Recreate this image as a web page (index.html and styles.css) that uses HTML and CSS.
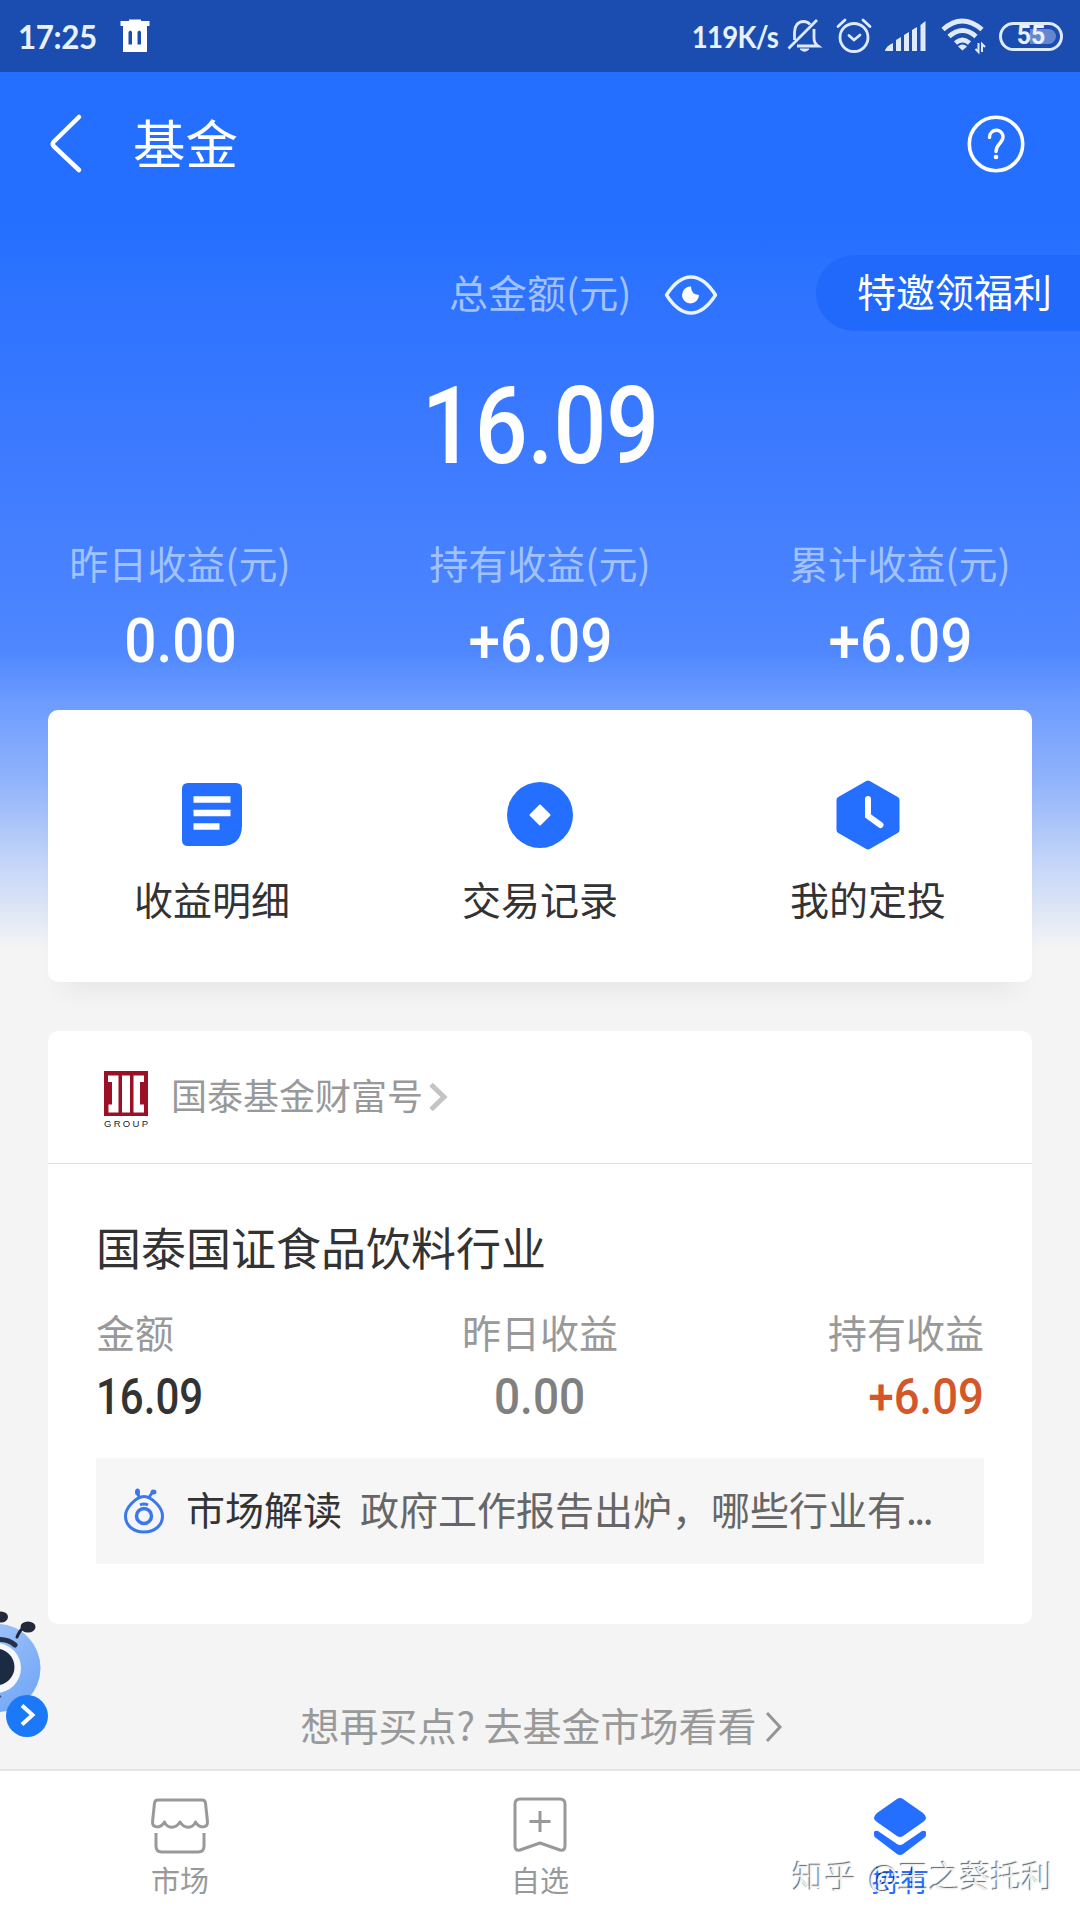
FILE: index.html
```html
<!DOCTYPE html>
<html lang="zh-CN">
<head>
<meta charset="utf-8">
<title>基金</title>
<link rel="stylesheet" href="styles.css">
</head>
<body>
<div class="app">
  <div class="status">
    <span class="clock">17:25</span>
    <svg class="trash" width="32" height="36" viewBox="0 0 32 36"><path fill="#fff" fill-rule="evenodd" d="M10 3V1.500h12V3h8.500v5H28v26H4V8H1.500V3zM9.500 14v12.500h3.500V14q-1.700-3-3.500 0zM18.500 14v12.500h3.500V14q-1.700-3-3.500 0z"/></svg>
    <span class="speed">119K/s</span>
    <svg class="bell" width="34" height="36" viewBox="0 0 34 36" fill="none" stroke="#dfeaff" stroke-width="2.800"><path d="M7.500 22V14c0-6 3.500-10.500 9-10.500 3 0 5 1 6.500 3M27 11v9c0 4 1 6 4 8H10M1.500 30.500L30 2"/><path d="M13 31h9q-4.500 4.500-9 0z" fill="#dfeaff" stroke-width="1"/></svg>
    <svg class="alarm" width="36" height="36" viewBox="0 0 36 36" fill="none" stroke="#dfeaff" stroke-width="2.800" stroke-linecap="round"><circle cx="18" cy="19.500" r="14"/><path d="M13 17.500l5 4.500 6-5M2 8.500l7-6.500M34 8.500L27 2"/></svg>
    <svg class="signal" width="42" height="32" viewBox="0 0 42 32" fill="#dfeaff"><path d="M0 31q1-5 8-8v8zM11 31V20l5-3v14zM19 31V15l5-3v19zM27 31V10l5-3v24zM35.500 31V5l5-4v30z"/></svg>
    <svg class="wifi" width="44" height="36" viewBox="0 0 44 36" fill="none" stroke="#dfeaff" stroke-width="4.800"><path d="M2 11.500q19-17 39 0M8 18.500q13.500-12 27 0M14.500 25q7-6 14 0"/><path d="M17 28.500q4.500-4 9 0l-4.500 4z" fill="#dfeaff" stroke="none"/><path d="M37.500 25v9l-3-3M41 34v-8l3 3" stroke-width="2"/></svg>
    <span class="battery"><i></i><b>55</b></span>
  </div>

  <div class="hero">
    <div class="titlebar">
      <svg width="36" height="60" viewBox="0 0 36 60" fill="none" stroke="#fff" stroke-width="4.500" stroke-linecap="round" stroke-linejoin="round"><path d="M32 3L6.500 28 Q5 30 6.500 32L32 56"/></svg>
      <h1>基金</h1>
      <svg class="help" width="60" height="60" viewBox="0 0 60 60" fill="none" stroke="#fff"><circle cx="30" cy="30" r="26.700" stroke-width="3.600"/><path d="M23.500 23.500c0-9.500 13.500-9.500 13.500-.5 0 6-7 7-7 14.500" stroke-width="3.400" stroke-linecap="round"/><circle cx="30" cy="43" r="2.300" fill="#fff" stroke="none"/></svg>
    </div>
    <div class="total-row">
      <span class="muted">总金额(元)</span>
      <svg width="54" height="40" viewBox="0 0 54 40"><path d="M2.500 20Q14 2 27 2T51.500 20Q40 38 27 38T2.500 20z" fill="none" stroke="#eaf3ff" stroke-width="3.400" stroke-linejoin="round"/><path d="M27 11.500q0 8 8 8.500a8.500 8.500 0 1 1-8-8.500z" fill="#fff"/></svg>
      <span class="invite">特邀领福利</span>
    </div>
    <div class="total"><span class="num">16.09</span></div>
    <div class="stats">
      <div><span class="muted">昨日收益(元)</span><span class="num">0.00</span></div>
      <div><span class="muted">持有收益(元)</span><span class="num">+6.09</span></div>
      <div><span class="muted">累计收益(元)</span><span class="num">+6.09</span></div>
    </div>
  </div>

  <div class="actions">
    <div>
      <svg width="72" height="72" viewBox="0 0 72 72"><path fill="#246fff" d="M12 4h48q6 0 6 6v36q0 21-21 21H12q-6 0-6-6V10q0-6 6-6z"/><path d="M17.500 20.500h37M17.500 34h37M17.500 47.500h26" stroke="#fff" stroke-width="6.500"/></svg>
      <span>收益明细</span>
    </div>
    <div>
      <svg width="72" height="72" viewBox="0 0 72 72"><circle cx="36" cy="36" r="33" fill="#246fff"/><path d="M36 26.500l9.500 9.500-9.500 9.500-9.500-9.500z" fill="#fff" stroke="#fff" stroke-width="2" stroke-linejoin="round"/></svg>
      <span>交易记录</span>
    </div>
    <div>
      <svg width="72" height="72" viewBox="0 0 72 72"><path d="M36 5L64 21V51L36 67 8 51V21z" fill="#246fff" stroke="#246fff" stroke-width="7" stroke-linejoin="round"/><path d="M36 20v17l12.500 9" fill="none" stroke="#fff" stroke-width="6" stroke-linecap="round"/></svg>
      <span>我的定投</span>
    </div>
  </div>

  <div class="fund">
    <div class="fund-head">
      <svg class="logo" width="48" height="60" viewBox="0 0 48 60"><path fill="#9c1026" d="M2 2h44v45H2z"/><path fill="#fff" d="M6 6.500h10.500v37H6.500v-8h3.500V13H6zM20 6.500h8v37h-8zM31.500 6.500H42V13h-4v22.500h4v8H31.500z"/><text x="2" y="58" textLength="44" font-family="Liberation Sans" font-size="9.500" fill="#222">GROUP</text></svg>
      <span>国泰基金财富号</span>
      <svg class="arrow" width="22" height="32" viewBox="0 0 22 32" fill="none" stroke="#c4c4c4" stroke-width="5"><path d="M3 3.500L16 16 3 28.500"/></svg>
    </div>
    <div class="fund-body">
      <h2>国泰国证食品饮料行业</h2>
      <div class="figures">
        <div><span>金额</span><span class="num dark">16.09</span></div>
        <div><span>昨日收益</span><span class="num grey">0.00</span></div>
        <div><span>持有收益</span><span class="num rise">+6.09</span></div>
      </div>
      <div class="notice">
        <svg width="42" height="48" viewBox="0 0 42 48" fill="none" stroke="#3b78ee"><path d="M21 9.500Q27 9.500 34 17 39.500 23 39.500 29C39.500 39 31 45 21 45S2.500 39 2.500 29Q2.500 23 8 17 15 9.500 21 9.500z" stroke-width="3"/><circle cx="21" cy="29" r="7.500" stroke-width="3.500"/><path d="M17 18q4-2 8 0" stroke-width="3"/><path d="M16.500 11l-2-5M25.500 11l3.500-5" stroke-width="3"/><ellipse cx="14.500" cy="5" rx="2.500" ry="3.500" fill="#3b78ee" stroke="none"/><ellipse cx="30.500" cy="5" rx="3" ry="2.500" fill="#3b78ee" stroke="none"/></svg>
        <strong>市场解读</strong>
        <span>政府工作报告出炉，哪些行业有<em>...</em></span>
      </div>
    </div>
  </div>

  <div class="more">
    <span>想再买点? 去基金市场看看</span>
    <svg width="22" height="34" viewBox="0 0 22 34" fill="none" stroke="#949494" stroke-width="3"><path d="M4 3l13 14L4 31"/></svg>
  </div>

  <nav class="tabs">
    <div>
      <svg width="60" height="60" viewBox="0 0 60 60" fill="none" stroke="#999" stroke-width="3"><path d="M8 4h44q3 0 3.500 3L57.500 26c0 6-8 7-12 0-3 7-11 7-15.500 0-4.500 7-12.500 7-15.500 0-4 7-12 6-12 0L4.500 7Q5 4 8 4zM6 37v13q0 6 6 6h36q6 0 6-6V37" stroke-linejoin="round"/></svg>
      <span>市场</span>
    </div>
    <div>
      <svg width="60" height="60" viewBox="0 0 60 60" fill="none" stroke="#999" stroke-width="3"><path d="M10 3h40q5 0 5 5v42q0 5-5 4L30 47 10 54q-5 1-5-4V8q0-5 5-5zM30 15v21M19.500 25.500h21" stroke-linejoin="round"/></svg>
      <span>自选</span>
    </div>
    <div class="active">
      <svg width="60" height="60" viewBox="0 0 60 60" fill="#246fff"><path d="M27 3q3-2 6 0l20 14q6 5 0 9L33 40q-3 2-6 0L7 26q-6-4 0-9z"/><path d="M4 36q1-2 4-1l19 13q3 2 6 0l19-13q3-1 4 1v3q0 2-2 3L33 58q-3 2-6 0L6 42q-2-1-2-3z"/></svg>
      <span>持有</span>
    </div>
  </nav>

  <div class="helper">
    <svg width="50" height="132" viewBox="0 0 50 132">
      <defs><linearGradient id="face" x1="0" y1="0" x2="1" y2="1"><stop offset="0" stop-color="#aecbf9"/><stop offset="1" stop-color="#6ba3f5"/></linearGradient></defs>
      <ellipse cx="-3" cy="66" rx="43.500" ry="44" fill="url(#face)"/>
      <circle cx="-4" cy="66" r="25" fill="#f6f7fd"/><circle cx="-4" cy="65" r="18.500" fill="#1d2b42"/>
      <path d="M-6 38q13-2 21 5" fill="none" stroke="#26304c" stroke-width="5" stroke-linecap="round"/>
      <path d="M17 35q3-7 7-10" fill="none" stroke="#20232f" stroke-width="3" stroke-linecap="round"/>
      <ellipse cx="28" cy="25" rx="7.500" ry="5.500" fill="#23283a"/><ellipse cx="1" cy="15" rx="7" ry="5.500" fill="#23283a"/>
      <path d="M-2 93l3 2" stroke="#3a4c7c" stroke-width="2"/>
      <circle cx="27" cy="114" r="21" fill="#1b78f7"/><path d="M22 103.500l10.500 9.500L22 122.500" fill="none" stroke="#fff" stroke-width="4"/>
    </svg>
  </div>
  <div class="watermark"><span>知乎</span> @王之葵托利</div>
</div>
</body>
</html>
```
FILE: styles.css
```css
* { box-sizing: border-box; }
body { margin: 0; font-family: "Noto Sans CJK SC", sans-serif; }
svg { display: block; flex: none; overflow: visible; }
h1, h2 { margin: 0; font-weight: 400; }
.app {
  position: relative; width: 1080px; height: 1920px; overflow: hidden;
  display: flex; flex-direction: column;
  background: linear-gradient(180deg, #246fff 0, #246fff 210px, #3b79ff 430px, #4882ff 580px, #4e87ff 650px, #6c9bff 700px, #91b3fb 780px, #c8d8f8 870px, #f4f4f4 950px);
}
.num { font-family: Roboto, sans-serif; font-weight: 500; display: inline-block; transform: scaleX(.9); }

.status {
  height: 72px; flex: none; background: #1b4db0; color: #e8f1ff;
  display: flex; align-items: center; padding: 0 17px 0 18px;
  font-family: Lato, sans-serif;
}
.clock { font-size: 33px; line-height: 40px; font-weight: 700; width: 101px; letter-spacing: -.4px; transform: scaleX(.95); transform-origin: left; }
.speed { margin-left: auto; font-size: 31px; font-weight: 700; letter-spacing: -.8px; transform: scaleX(.89); transform-origin: right; }
.bell { margin-left: 9px; }
.alarm { margin-left: 15px; }
.signal { margin-left: 13px; }
.wifi { margin-left: 14px; }
.battery {
  position: relative; margin-left: 14px; width: 64px; height: 29px;
  border: 3px solid #dfeaff; border-radius: 15px;
  display: flex; align-items: center; justify-content: center;
}
.battery i { position: absolute; left: 28px; top: 4px; width: 26px; height: 15px; border-radius: 0 8px 8px 0; background: #6487cf; }
.battery b { position: relative; font: 700 25px/24px Roboto, sans-serif; }

.hero { height: 638px; flex: none; color: #fff; }
.titlebar { height: 144px; display: flex; align-items: center; padding: 0 54px 0 47px; }
.titlebar h1 { margin: 0 0 7px 50px; font-size: 52.500px; line-height: 60px; }
.help { margin-left: auto; }
.muted { color: #a1c2ff; font-size: 39px; line-height: 48px; }
.total-row { height: 76px; margin-top: 39px; display: flex; align-items: center; padding-left: 449px; }
.total-row .muted { margin-bottom: 4px; }
.total-row svg { margin: 4px 0 0 33px; }
.invite {
  margin-left: auto; width: 264px; height: 76px; line-height: 70px; padding-left: 41px;
  border-radius: 38px 0 0 38px; background: #2069fb; font-size: 39px;
}
.total { height: 130px; margin-top: 18px; font-size: 107px; line-height: 136px; text-align: center; }
.total .num { transform: scaleX(.87); }
.stats { display: grid; grid-template-columns: repeat(3, 1fr); margin-top: 59px; }
.stats div { display: flex; flex-direction: column; align-items: center; }
.stats .num { font-size: 61px; line-height: 72px; margin-top: 19px; transform: scaleX(.93); }

.actions {
  flex: none; margin: 0 48px; height: 272px; background: #fff; border-radius: 10px;
  box-shadow: 0 22px 24px -14px rgba(0, 0, 0, .06);
  display: grid; grid-template-columns: repeat(3, 1fr); color: #333;
}
.actions div { display: flex; flex-direction: column; align-items: center; padding-top: 69px; }
.actions span { margin-top: 23px; font-size: 39px; line-height: 48px; }

.fund { flex: none; margin: 49px 48px 0; height: 593px; background: #fff; border-radius: 10px; }
.fund-head { height: 133px; border-bottom: 1px solid #dedede; display: flex; align-items: center; padding-left: 54px; color: #999; font-size: 36px; }
.logo { margin-top: 3px; }
.fund-head span { margin: 0 0 6px 21px; line-height: 44px; }
.arrow { margin-left: 5px; }
.fund-body { padding: 53px 48px 0; }
.fund-body h2 { font-size: 45px; line-height: 60px; color: #333; }
.figures { display: grid; grid-template-columns: repeat(3, 1fr); margin-top: 30px; font-size: 39px; line-height: 48px; color: #999; }
.figures div { display: flex; flex-direction: column; align-items: center; }
.figures div:first-child { align-items: flex-start; }
.figures div:last-child { align-items: flex-end; }
.figures .num { font-size: 50px; line-height: 60px; margin-top: 12px; transform: scaleX(.88); }
.figures .dark { color: #333; transform: scaleX(.84); transform-origin: left; }
.figures .grey { color: #808080; transform: scaleX(.92); }
.figures .rise { color: #d4572a; transform: scaleX(.91); transform-origin: right; }
.notice { margin-top: 31px; height: 106px; background: #f6f6f6; display: flex; align-items: center; padding-left: 27px; font-size: 39px; line-height: 48px; color: #666; white-space: nowrap; }
.notice strong { font-weight: 400; color: #333; margin: 0 0 7px 21px; }
.notice span { margin: 0 0 7px 18px; }
.notice em { font-style: normal; letter-spacing: -2.500px; }

.more { flex: none; height: 145px; padding-top: 60px; display: flex; justify-content: center; align-items: center; font-size: 39px; color: #999; }
.more span { margin: 0 0 5px 5px; line-height: 48px; }
.more svg { margin-left: 6px; }
.tabs { height: 151px; background: #fff; border-top: 2px solid #e6e6e6; display: grid; grid-template-columns: repeat(3, 1fr); color: #999; font-size: 29px; line-height: 36px; }
.tabs div { display: flex; flex-direction: column; align-items: center; padding-top: 25px; }
.tabs span { margin-top: 5px; }
.tabs .active { color: #246fff; }
.helper { position: absolute; left: 0; top: 1602px; }
.watermark { position: absolute; right: 27px; top: 1855px; font-size: 31px; line-height: 40px; color: rgba(255,255,255,.9); text-shadow: -1px -1px 1px rgba(0,0,0,.6); }
.watermark span { letter-spacing: 1.500px; margin-right: 4px; }
```
